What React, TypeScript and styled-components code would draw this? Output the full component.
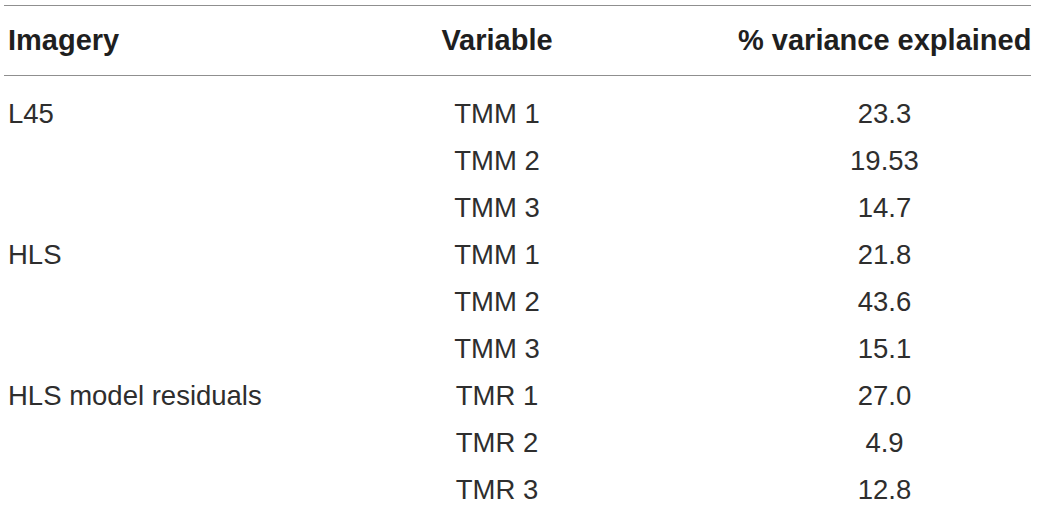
import React from 'react'
import { styled, createGlobalStyle } from 'styled-components'

const GlobalStyle = createGlobalStyle`
    html, body {
        margin: 0px;
        padding: 0px;
        background: #ffffff;
    }
    body {
        font-family: 'Liberation Sans', Arial, Helvetica, sans-serif;
    }
`

interface CellProps {
    align?: 'left' | 'center'
    col: 1 | 2 | 3
}

const Page = styled.div`
    padding: 5px 8px 0px 4px;
    height: 507px;
    overflow: hidden;
    box-sizing: border-box;
`

const Table = styled.div`
    width: 1027px;
    border-top: 1.5px solid #8f8f8f;
`

const Row = styled.div`
    display: grid;
    grid-template-columns: 336px 314px 377px;
    align-items: center;
`

const HeaderRow = styled(Row)`
    height: 69px;
    border-bottom: 1.5px solid #8f8f8f;
`

const Body = styled.div`
    padding-top: 14px;
`

const BodyRow = styled(Row)`
    height: 47px;
`

const Cell = styled.div<CellProps>`
    font-size: 27.5px;
    color: #2e2e2e;
    white-space: nowrap;
    text-align: ${props => (props.align === 'left' ? 'left' : 'center')};
    padding-left: ${props => (props.col === 1 ? '4px' : props.col === 3 ? '84px' : '0px')};
`

const HeadCell = styled(Cell)`
    font-size: 29px;
    font-weight: bold;
    color: #1f1f1f;
`

const rows: [string, string, string][] = [
    ['L45', 'TMM 1', '23.3'],
    ['', 'TMM 2', '19.53'],
    ['', 'TMM 3', '14.7'],
    ['HLS', 'TMM 1', '21.8'],
    ['', 'TMM 2', '43.6'],
    ['', 'TMM 3', '15.1'],
    ['HLS model residuals', 'TMR 1', '27.0'],
    ['', 'TMR 2', '4.9'],
    ['', 'TMR 3', '12.8'],
]

export default function App() {
    return (
        <>
            <GlobalStyle />
            <Page>
                <Table>
                    <HeaderRow>
                        <HeadCell col={1} align="left">Imagery</HeadCell>
                        <HeadCell col={2}>Variable</HeadCell>
                        <HeadCell col={3}>% variance explained</HeadCell>
                    </HeaderRow>
                    <Body>
                        {rows.map((r, i) => (
                            <BodyRow key={i}>
                                <Cell col={1} align="left">{r[0]}</Cell>
                                <Cell col={2}>{r[1]}</Cell>
                                <Cell col={3}>{r[2]}</Cell>
                            </BodyRow>
                        ))}
                    </Body>
                </Table>
            </Page>
        </>
    )
}
